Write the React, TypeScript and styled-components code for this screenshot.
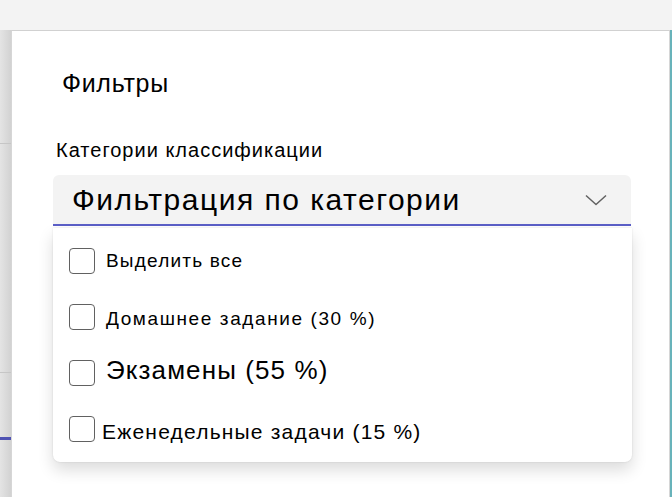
import React, { FC } from 'react';
import styled, { createGlobalStyle } from 'styled-components';

const GlobalStyle = createGlobalStyle`
  html, body {
    margin: 0;
    padding: 0;
    background: #f3f3f3;
    font-family: "Liberation Sans", Arial, sans-serif;
    color: #000;
  }
`;

const Page = styled.div`
  width: 672px;
  height: 497px;
  display: flex;
  flex-direction: column;
  overflow: hidden;
`;

const TopBar = styled.div`
  height: 30px;
  background: #f3f3f3;
  flex-shrink: 0;
`;

const Body = styled.div`
  flex: 1;
  display: flex;
`;

const LeftStrip = styled.div`
  width: 11px;
  flex-shrink: 0;
  background: linear-gradient(to right, #e4e4e4, #d2d2d2);
  display: flex;
  flex-direction: column;
`;

const StripLine = styled.div<{ $top: number; $color: string; $h: number }>`
  margin-top: ${p => p.$top}px;
  height: ${p => p.$h}px;
  background: ${p => p.$color};
`;

const Panel = styled.div`
  flex: 1;
  background: #fff;
  border-top: 1px solid #d1d1d1;
  border-left: 1px solid #d6d6d6;
  border-right: 1px solid #d6d6d6;
  padding: 0 38px 0 41px;
`;

const RightEdge = styled.div`
  width: 2px;
  flex-shrink: 0;
  background: #68b3ba;
`;

const Title = styled.h2`
  margin: 37px 0 0 9px;
  font-size: 25px;
  letter-spacing: 0.7px;
  font-weight: 400;
  line-height: 30px;
`;

const FieldLabel = styled.label`
  display: block;
  margin: 40px 0 0 3px;
  font-size: 20px;
  letter-spacing: 1px;
  line-height: 25px;
`;

const DropdownWrap = styled.div`
  position: relative;
  margin-top: 12px;
`;

const Dropdown = styled.button`
  width: 100%;
  height: 51px;
  display: flex;
  align-items: center;
  justify-content: space-between;
  padding: 0 24px 0 19px;
  box-sizing: border-box;
  background: #f3f3f3;
  border: none;
  border-bottom: 2px solid #5b5fc7;
  border-radius: 6px 6px 0 0;
  font-family: inherit;
  font-size: 30px;
  letter-spacing: 1.5px;
  color: #000;
  cursor: pointer;
`;

const ListBox = styled.div`
  position: absolute;
  top: 53px;
  left: 0;
  right: -1px;
  background: #fff;
  border-radius: 0 0 7px 7px;
  box-shadow: 0 8px 16px rgba(0, 0, 0, 0.14), 0 0 2px rgba(0, 0, 0, 0.12);
  padding: 5px 0;
`;

const Option = styled.label`
  height: 56px;
  display: flex;
  align-items: center;
  padding-left: 16px;
  cursor: pointer;
`;

const Box = styled.span`
  width: 24px;
  height: 24px;
  border: 1px solid #616161;
  border-radius: 4px;
  flex-shrink: 0;
`;

const OptionText = styled.span<{ $size: number; $gap: number; $dy: number; $ls: number }>`
  margin-left: ${p => p.$gap}px;
  font-size: ${p => p.$size}px;
  letter-spacing: ${p => p.$ls}px;
  position: relative;
  top: ${p => p.$dy}px;
`;

const Chevron: FC = () => (
  <svg width="22" height="12" viewBox="0 0 22 12" fill="none">
    <path d="M1 1.5 L11 10.5 L21 1.5" stroke="#616161" strokeWidth="1.5" strokeLinejoin="round" />
  </svg>
);

const options = [
  { text: 'Выделить все', size: 19, ls: 1.2, gap: 11, dy: 0 },
  { text: 'Домашнее задание (30 %)', size: 19, ls: 1.6, gap: 11, dy: 2 },
  { text: 'Экзамены (55 %)', size: 26, ls: 1.1, gap: 11, dy: -3 },
  { text: 'Еженедельные задачи (15 %)', size: 21, ls: 1.2, gap: 7, dy: 3 },
];

export default function App() {
  return (
    <Page>
      <GlobalStyle />
      <TopBar />
      <Body>
        <LeftStrip>
          <StripLine $top={113} $h={1} $color="#c6c6c6" />
          <StripLine $top={228} $h={1} $color="#c6c6c6" />
          <StripLine $top={64} $h={3} $color="#4f52b2" />
        </LeftStrip>
        <Panel>
          <Title>Фильтры</Title>
          <FieldLabel>Категории классификации</FieldLabel>
          <DropdownWrap>
            <Dropdown>
              <span>Фильтрация по категории</span>
              <Chevron />
            </Dropdown>
            <ListBox>
              {options.map(o => (
                <Option key={o.text}>
                  <Box />
                  <OptionText $size={o.size} $ls={o.ls} $gap={o.gap} $dy={o.dy}>{o.text}</OptionText>
                </Option>
              ))}
            </ListBox>
          </DropdownWrap>
        </Panel>
        <RightEdge />
      </Body>
    </Page>
  );
}
